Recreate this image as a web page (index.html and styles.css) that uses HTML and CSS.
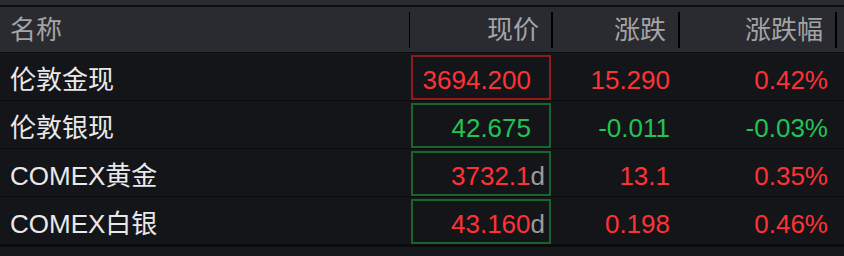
FILE: index.html
```html
<!DOCTYPE html>
<html lang="zh">
<head>
<meta charset="utf-8">
<link rel="stylesheet" href="styles.css">
</head>
<body>
<div class="board">
  <div class="topstrip"></div>
  <div class="head">
    <div class="hcell hname">名称</div>
    <div class="hcell">现价</div>
    <div class="hcell">涨跌</div>
    <div class="hcell">涨跌幅</div>
    <div class="hfill"></div>
  </div>
  <div class="row">
    <div class="name">伦敦金现</div>
    <div class="price up-box"><span class="up">3694.200</span></div>
    <div class="num up">15.290</div>
    <div class="num pct up">0.42%</div>
  </div>
  <div class="row">
    <div class="name">伦敦银现</div>
    <div class="price down-box"><span class="down">42.675</span></div>
    <div class="num down">-0.011</div>
    <div class="num pct down">-0.03%</div>
  </div>
  <div class="row">
    <div class="name">COMEX黄金</div>
    <div class="price down-box"><span class="up">3732.1</span><span class="delay">d</span></div>
    <div class="num up">13.1</div>
    <div class="num pct up">0.35%</div>
  </div>
  <div class="row">
    <div class="name">COMEX白银</div>
    <div class="price down-box"><span class="up">43.160</span><span class="delay">d</span></div>
    <div class="num up">0.198</div>
    <div class="num pct up">0.46%</div>
  </div>
  <div class="footstrip"></div>
</div>
</body>
</html>
```

FILE: styles.css
```css
html, body {
  margin: 0;
  padding: 0;
  background: #141519;
}

.board {
  width: 844px;
  height: 256px;
  overflow: hidden;
  font-family: "Liberation Sans", "Noto Sans CJK SC", sans-serif;
  font-size: 26px;
  background: #141519;
}

.topstrip {
  height: 5px;
  background: #2a2b30;
  border-bottom: 2px solid #0d0d0f;
}

.head {
  display: grid;
  grid-template-columns: 410px 143px 127px 157px 1fr;
  align-items: center;
  height: 45px;
  background: #2a2b30;
  border-bottom: 1px solid #0d0d0f;
  color: #a4a4a6;
}

.hcell {
  height: 36px;
  line-height: 36px;
  text-align: right;
  padding-right: 12px;
  border-right: 2px solid #000;
  margin-top: 1px;
  white-space: nowrap;
}

.hname {
  text-align: left;
  padding-left: 10px;
  padding-right: 0;
  border-right-width: 1px;
}

.row {
  display: grid;
  grid-template-columns: 411px 140px 127px 159px 1fr;
  height: 47px;
  border-bottom: 1px solid #0b0b0d;
  background: #141519;
  line-height: 30px;
  white-space: nowrap;
}

.name {
  color: #e9e9ea;
  padding-left: 10px;
  padding-top: 12px;
}

.price {
  box-sizing: border-box;
  margin-top: 2px;
  height: 45px;
  border: 2px solid;
  text-align: right;
  padding-right: 18px;
  padding-top: 8px;
}

.up-box { border-color: #8e1b1d; }
.down-box { border-color: #17652d; }

.num {
  text-align: right;
  padding-right: 8px;
  padding-top: 12px;
}

.pct { padding-right: 9px; }

.up { color: #fe3235; }
.down { color: #22c353; }

.delay {
  color: #9b9b9d;
  margin-right: -14px;
}

.footstrip {
  height: 9px;
  border-top: 2px solid #0b0b0d;
  background: #17181c;
}
```
